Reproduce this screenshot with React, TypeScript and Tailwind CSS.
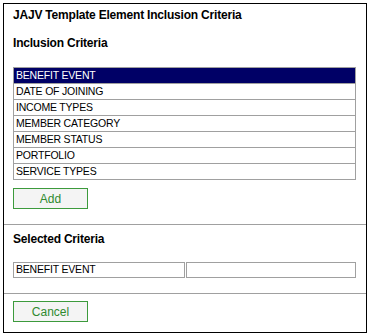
const criteria = [
  'BENEFIT EVENT',
  'DATE OF JOINING',
  'INCOME TYPES',
  'MEMBER CATEGORY',
  'MEMBER STATUS',
  'PORTFOLIO',
  'SERVICE TYPES',
];

function GreenButton({ label }: { label: string }) {
  return (
    <button className="ml-[9px] flex h-[21px] w-[75px] items-center justify-center border border-[#3c9a3c] bg-[#f4f4f4] text-[12px] text-[#2f8a2f]">
      {label}
    </button>
  );
}

export default function App() {
  const selected = 0;

  return (
    <div className="h-[335px] w-[372px] bg-white pl-[3px] pt-[3px] font-['Liberation_Sans',Arial,sans-serif] text-black">
      <div className="flex h-[330px] w-[364px] flex-col border border-black">
        <div className="ml-[9px] mt-[4px] text-[12px] font-bold leading-[14px] tracking-[-0.2px]">
          JAJV Template Element Inclusion Criteria
        </div>
        <div className="ml-[9px] mt-[14px] text-[12px] font-bold leading-[14px] tracking-[-0.2px]">
          Inclusion Criteria
        </div>

        <div className="ml-[9px] mt-[17px] w-[343px] border-t border-[#a0a0a0]">
          {criteria.map((c, i) => (
            <div
              key={c}
              className={
                i === selected
                  ? 'flex h-[16px] items-center border border-t-0 border-[#a0a0a0] bg-[#000066] pl-[2px] text-[10.5px] tracking-[-0.2px] text-white'
                  : 'flex h-[16px] items-center border border-t-0 border-[#a0a0a0] pl-[2px] text-[10.5px] tracking-[-0.2px]'
              }
            >
              {c}
            </div>
          ))}
        </div>

        <div className="mt-[8px]">
          <GreenButton label="Add" />
        </div>

        <div className="mt-[15px] h-px w-full bg-[#a0a0a0]" />

        <div className="ml-[9px] mt-[7px] text-[12px] font-bold leading-[14px] tracking-[-0.2px]">
          Selected Criteria
        </div>

        <div className="ml-[9px] mt-[16px] flex w-[343px]">
          <div className="flex h-[16px] w-[172px] items-center border border-[#a0a0a0] pl-[2px] text-[10.5px] tracking-[-0.2px]">
            BENEFIT EVENT
          </div>
          <div className="ml-px h-[16px] flex-1 border border-[#a0a0a0]" />
        </div>

        <div className="mt-[15px] h-px w-full bg-[#a0a0a0]" />

        <div className="mt-[7px]">
          <GreenButton label="Cancel" />
        </div>
      </div>
    </div>
  );
}
